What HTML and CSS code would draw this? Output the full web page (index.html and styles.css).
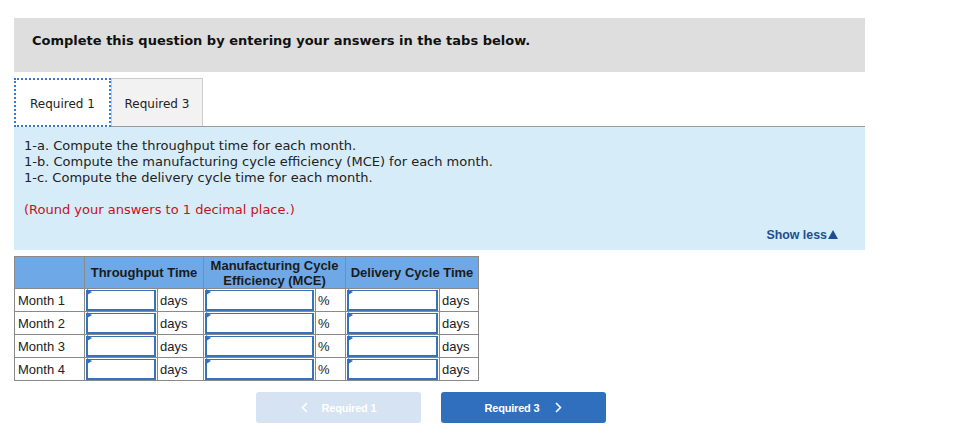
FILE: index.html
```html
<!DOCTYPE html>
<html>
<head>
<meta charset="utf-8">
<link rel="stylesheet" href="styles.css">
</head>
<body>
<div class="page">
  <div class="instr">Complete this question by entering your answers in the tabs below.</div>
  <div class="tabs">
    <div class="tab active">Required 1</div>
    <div class="tab">Required 3</div>
  </div>
  <div class="panel">
    <p class="q">1-a. Compute the throughput time for each month.<br>1-b. Compute the manufacturing cycle efficiency (MCE) for each month.<br>1-c. Compute the delivery cycle time for each month.</p>
    <p class="red">(Round your answers to 1 decimal place.)</p>
    <div class="showless"><span>Show less</span><svg class="tri" width="10" height="9" viewBox="0 0 10 9"><polygon points="5,0 10,9 0,9" fill="#1d4f8e"/></svg></div>
  </div>
  <table class="grid">
    <colgroup>
      <col class="c-label"><col class="c-in1"><col class="c-u1"><col class="c-in2"><col class="c-u2"><col class="c-in3"><col class="c-u3">
    </colgroup>
    <thead>
      <tr>
        <th></th>
        <th colspan="2">Throughput Time</th>
        <th colspan="2">Manufacturing Cycle<br>Efficiency (MCE)</th>
        <th colspan="2">Delivery Cycle Time</th>
      </tr>
    </thead>
    <tbody>
      <tr>
        <td class="lbl">Month 1</td>
        <td class="inp"><div class="box"></div><span class="flag"></span></td><td class="unit">days</td>
        <td class="inp"><div class="box"></div><span class="flag"></span></td><td class="unit">%</td>
        <td class="inp"><div class="box"></div><span class="flag"></span></td><td class="unit">days</td>
      </tr>
      <tr>
        <td class="lbl">Month 2</td>
        <td class="inp"><div class="box"></div><span class="flag"></span></td><td class="unit">days</td>
        <td class="inp"><div class="box"></div><span class="flag"></span></td><td class="unit">%</td>
        <td class="inp"><div class="box"></div><span class="flag"></span></td><td class="unit">days</td>
      </tr>
      <tr>
        <td class="lbl">Month 3</td>
        <td class="inp"><div class="box"></div><span class="flag"></span></td><td class="unit">days</td>
        <td class="inp"><div class="box"></div><span class="flag"></span></td><td class="unit">%</td>
        <td class="inp"><div class="box"></div><span class="flag"></span></td><td class="unit">days</td>
      </tr>
      <tr>
        <td class="lbl">Month 4</td>
        <td class="inp"><div class="box"></div><span class="flag"></span></td><td class="unit">days</td>
        <td class="inp"><div class="box"></div><span class="flag"></span></td><td class="unit">%</td>
        <td class="inp"><div class="box"></div><span class="flag"></span></td><td class="unit">days</td>
      </tr>
    </tbody>
  </table>
  <div class="nav">
    <div class="btn disabled"><svg class="chev" width="7" height="11" viewBox="0 0 7 11"><polyline points="6,1 1.5,5.5 6,10" fill="none" stroke="#fff" stroke-width="1.6"/></svg><span>Required 1</span></div>
    <div class="btn primary"><span>Required 3</span><svg class="chev" width="7" height="11" viewBox="0 0 7 11"><polyline points="1,1 5.5,5.5 1,10" fill="none" stroke="#fff" stroke-width="1.6"/></svg></div>
  </div>
</div>
</body>
</html>
```

FILE: styles.css
```css
html, body {
  margin: 0;
  padding: 0;
  background: #fff;
}
.page {
  padding: 18px 0 0 14px;
  width: 851px;
  font-family: "DejaVu Sans", Verdana, sans-serif;
  color: #222;
}
.instr {
  box-sizing: border-box;
  height: 54px;
  background: #dedede;
  padding: 15px 18px 0;
  font-weight: bold;
  font-size: 13px;
  line-height: 16px;
  color: #111;
}
.tabs {
  margin-top: 6px;
  display: flex;
  border-bottom: 1px solid #9a9a9a;
  height: 48px;
}
.tab {
  box-sizing: border-box;
  height: 48px;
  display: flex;
  align-items: center;
  justify-content: center;
  padding-top: 2px;
  font-size: 12px;
  color: #222;
}
.tab.active {
  width: 97px;
  height: 49px;
  margin-bottom: -1px;
  background: #fff;
  border: 2px dotted #3a78c9;
  position: relative;
  z-index: 1;
}
.tab:not(.active) {
  width: 92px;
  background: #f2f2f2;
  border: 1px solid #cccccc;
  border-bottom: none;
}
.panel {
  background: #d6ecf9;
  padding: 11px 27px 7px 10px;
  font-size: 13px;
  line-height: 16px;
}
.panel p {
  margin: 0;
}
.panel .q {
  color: #222;
}
.panel .red {
  margin-top: 16px;
  color: #c8101e;
}
.showless {
  margin-top: 9px;
  display: flex;
  justify-content: flex-end;
  align-items: center;
  font-family: "Liberation Sans", Arial, sans-serif;
  font-weight: bold;
  font-size: 12.4px;
  color: #1d4f8e;
}
.showless .tri {
  margin-left: 1px;
  margin-top: -1px;
}
.grid {
  margin-top: 6px;
  border-collapse: collapse;
  table-layout: fixed;
  width: 464px;
  font-family: "Liberation Sans", Arial, sans-serif;
  font-size: 13px;
  color: #222;
}
.c-label { width: 70px; }
.c-in1 { width: 73px; }
.c-u1 { width: 46px; }
.c-in2 { width: 112px; }
.c-u2 { width: 30px; }
.c-in3 { width: 94px; }
.c-u3 { width: 39px; }
.grid th {
  background: #6fa8e6;
  border: 1px solid #8a8a8a;
  height: 31px;
  padding: 0;
  font-size: 13px;
  font-weight: bold;
  line-height: 15px;
  color: #1b1b1b;
}
.grid td {
  border: 1px solid #8a8a8a;
  height: 22px;
  padding: 0;
}
.grid td.lbl {
  padding-left: 3px;
}
.grid td.unit {
  padding-left: 2px;
}
.grid td.inp {
  position: relative;
  padding: 0 1px;
}
.box {
  box-sizing: border-box;
  height: 21px;
  border: 2px solid #3a72b8;
  border-top-width: 1px;
  background: #fff;
}
.flag {
  position: absolute;
  left: 2px;
  top: 0;
  width: 0;
  height: 0;
  border-left: 5px solid #2f6fc4;
  border-top: 3px solid transparent;
  border-bottom: 3px solid transparent;
}
.nav {
  margin-top: 11px;
  margin-left: 242px;
  display: flex;
  gap: 20px;
}
.btn {
  width: 165px;
  height: 31px;
  border-radius: 3px;
  display: flex;
  align-items: center;
  justify-content: center;
  gap: 14px;
  font-family: "Liberation Sans", Arial, sans-serif;
  font-weight: bold;
  font-size: 11px;
  letter-spacing: -0.2px;
  color: #fff;
}
.btn.disabled {
  background: #d5e3f2;
}
.btn.primary {
  background: #2f6fbd;
  gap: 16px;
}
```
